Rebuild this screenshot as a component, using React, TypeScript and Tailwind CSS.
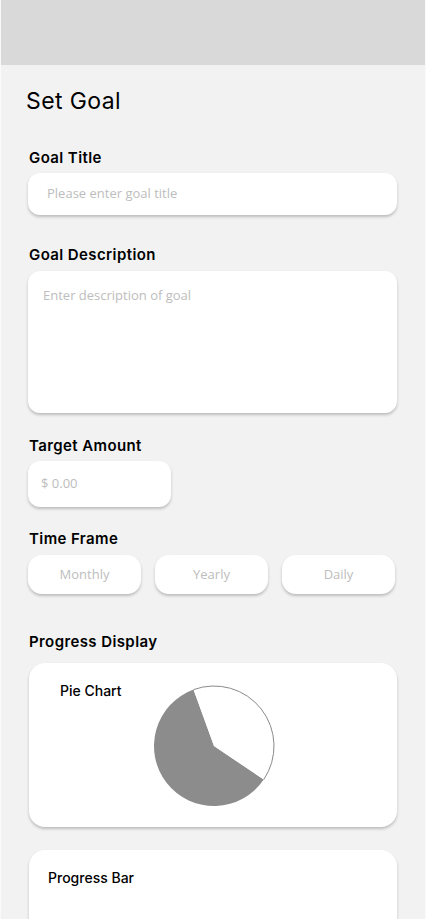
import React from 'react';

const labelClass =
  'ml-[1px] h-[20px] text-[15px] leading-[20px] font-semibold text-black tracking-[0.4px]';
const fieldClass =
  'w-[369px] rounded-[12px] bg-white shadow-[0_2px_3px_rgba(0,0,0,0.22)]';
const hintClass = "text-[13px] text-[#bdbdbd] font-['Open_Sans',sans-serif]";

function PieChart() {
  // white slice runs from -20deg to 124deg clockwise, the rest is grey
  const cx = 61;
  const cy = 61;
  const r = 60;
  const pt = (deg: number) => {
    const a = (deg * Math.PI) / 180;
    return [cx + r * Math.sin(a), cy - r * Math.cos(a)];
  };
  const [x1, y1] = pt(-20);
  const [x2, y2] = pt(124);

  return (
    <svg width="122" height="122" viewBox="0 0 122 122">
      <path
        d={`M${cx} ${cy} L${x2} ${y2} A${r} ${r} 0 1 1 ${x1} ${y1} Z`}
        fill="#8c8c8c"
      />
      <path
        d={`M${cx} ${cy} L${x1} ${y1} A${r} ${r} 0 0 1 ${x2} ${y2} Z`}
        fill="#ffffff"
      />
      <path
        d={`M${x1} ${y1} A${r} ${r} 0 0 1 ${x2} ${y2}`}
        fill="none"
        stroke="#8a8a8a"
        strokeWidth="1"
      />
    </svg>
  );
}

export default function App() {
  const frames = ['Monthly', 'Yearly', 'Daily'];

  return (
    <div className="h-[919px] w-[426px] overflow-hidden border-x border-[#fafafa] bg-[#f2f2f2] font-['Inter',sans-serif]">
      <div className="h-[65px] bg-[#d9d9d9]" />

      <div className="flex flex-col pl-[27px] pt-[22px]">
        <h1 className="-ml-[2px] h-[28px] text-[23px] leading-[28px] font-normal tracking-[0.4px] text-black">
          Set Goal
        </h1>

        <div className={`mt-[33px] ${labelClass}`}>Goal Title</div>
        <div className={`mt-[5px] flex h-[42px] items-center pl-[19px] ${fieldClass}`}>
          <span className={hintClass}>Please enter goal title</span>
        </div>

        <div className={`mt-[30px] ${labelClass}`}>Goal Description</div>
        <div className={`mt-[6px] h-[142px] pl-[15px] pt-[15px] ${fieldClass}`}>
          <span className={`block leading-[18px] ${hintClass}`}>
            Enter description of goal
          </span>
        </div>

        <div className={`mt-[23px] ${labelClass}`}>Target Amount</div>
        <div className="mt-[5px] flex h-[46px] w-[143px] items-center rounded-[12px] bg-white pl-[13px] shadow-[0_2px_3px_rgba(0,0,0,0.22)]">
          <span className={hintClass}>$ 0.00</span>
        </div>

        <div className={`mt-[22px] ${labelClass}`}>Time Frame</div>
        <div className="mt-[6px] flex gap-[14px]">
          {frames.map((f) => (
            <div
              key={f}
              className="flex h-[39px] w-[113px] items-center justify-center rounded-[14px] bg-white shadow-[0_2px_3px_rgba(0,0,0,0.22)]"
            >
              <span className={hintClass}>{f}</span>
            </div>
          ))}
        </div>

        <div className={`mt-[38px] ${labelClass}`}>Progress Display</div>
        <div className="ml-[1px] mt-[11px] flex h-[164px] w-[368px] items-start rounded-[16px] bg-white shadow-[0_2px_3px_rgba(0,0,0,0.22)]">
          <div className="w-[124px] pl-[31px] pt-[19px] text-[14px] leading-[18px] font-medium text-black">
            Pie Chart
          </div>
          <div className="mt-[22px]">
            <PieChart />
          </div>
        </div>

        <div className="ml-[1px] mt-[23px] h-[120px] w-[368px] rounded-[16px] bg-white shadow-[0_2px_3px_rgba(0,0,0,0.22)]">
          <div className="pl-[19px] pt-[19px] text-[14px] leading-[18px] font-medium text-black">
            Progress Bar
          </div>
        </div>
      </div>
    </div>
  );
}
